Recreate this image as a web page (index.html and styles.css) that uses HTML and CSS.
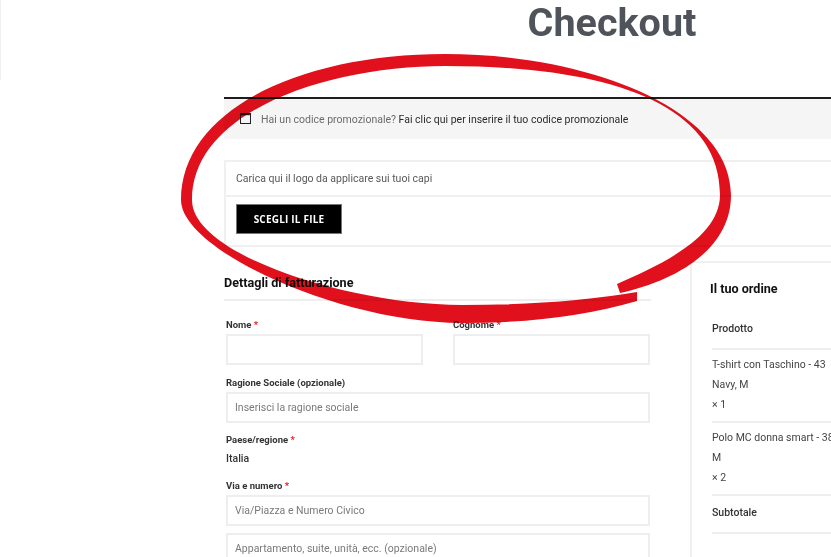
FILE: index.html
```html
<!DOCTYPE html>
<html lang="it">
<head>
<meta charset="utf-8">
<title>Checkout</title>
<link rel="stylesheet" href="styles.css">
</head>
<body>
<div class="page">
  <div class="edge"></div>
  <main class="main">
    <h1 class="title">Checkout</h1>

    <div class="promo">
      <svg class="promo-icon" width="11" height="11" viewBox="0 0 11 11" aria-hidden="true">
        <rect x="0.5" y="0.5" width="10" height="10" fill="none" stroke="#222" stroke-width="1"/>
        <rect x="0" y="0" width="11" height="2.2" fill="#222"/>
      </svg>
      <span class="muted">Hai un codice promozionale?</span>&nbsp;<a class="link" href="#">Fai clic qui per inserire il tuo codice promozionale</a>
    </div>

    <section class="upload">
      <div class="upload-label">Carica qui il logo da applicare sui tuoi capi</div>
      <div class="upload-action"><button class="file-btn" type="button">SCEGLI IL FILE</button></div>
    </section>

    <div class="cols">
      <section class="billing">
        <h3 class="section-title">Dettagli di fatturazione</h3>
        <div class="fields">
          <div class="row-2">
            <div class="field">
              <label class="lbl">Nome <span class="req">*</span></label>
              <input class="inp" type="text">
            </div>
            <div class="field">
              <label class="lbl">Cognome <span class="req">*</span></label>
              <input class="inp" type="text">
            </div>
          </div>
          <div class="field field-gap">
            <label class="lbl">Ragione Sociale (opzionale)</label>
            <input class="inp" type="text" placeholder="Inserisci la ragione sociale">
          </div>
          <div class="field field-gap-s">
            <label class="lbl">Paese/regione <span class="req">*</span></label>
            <div class="country">Italia</div>
          </div>
          <div class="field field-gap-l">
            <label class="lbl">Via e numero <span class="req">*</span></label>
            <input class="inp" type="text" placeholder="Via/Piazza e Numero Civico">
            <input class="inp inp-next" type="text" placeholder="Appartamento, suite, unità, ecc. (opzionale)">
          </div>
        </div>
      </section>

      <aside class="order">
        <h3 class="order-title">Il tuo ordine</h3>
        <div class="order-table">
          <div class="order-head">Prodotto</div>
          <div class="order-row">
            <div>T-shirt con Taschino - 43</div>
            <div>Navy, M</div>
            <div>× 1</div>
          </div>
          <div class="order-row">
            <div>Polo MC donna smart - 38</div>
            <div>M</div>
            <div>× 2</div>
          </div>
          <div class="order-sub">Subtotale</div>
        </div>
      </aside>
    </div>
  </main>
</div>

<svg class="scribble" width="831" height="557" viewBox="0 0 831 557" aria-hidden="true">
  <path fill="#e1101d" d="M 620 293
    C 675 281, 731 250, 731 195
    C 731 110, 590 54, 445 54
    C 300 54, 181 110, 181 200
    C 181 250, 340 323, 462 323
    A 275 99 0 0 0 637 301
    L 637 292
    A 265 52 0 0 1 462 305
    C 350 305, 192 255, 192 200
    C 192 110, 330 66, 445 66
    C 600 66, 720 100, 720 195
    C 720 235, 668 262, 617 284 Z"/>
</svg>
</body>
</html>
```

FILE: styles.css
```css
* { box-sizing: border-box; }

html, body {
  margin: 0;
  padding: 0;
  background: #fff;
}

body {
  width: 831px;
  height: 557px;
  overflow: hidden;
  font-family: Roboto, "Liberation Sans", Arial, sans-serif;
  color: #333;
}

.page {
  display: flex;
  align-items: flex-start;
}

.edge {
  flex: 0 0 1px;
  height: 80px;
  background: #f1f1f1;
}

.main {
  flex: 0 0 776px;
  width: 776px;
  margin-left: 223px;
}

.title {
  margin: 1px 0 52px;
  font-size: 39.5px;
  line-height: 44px;
  font-weight: 700;
  text-align: center;
  color: #4f535a;
}

/* promo bar */
.promo {
  display: flex;
  align-items: center;
  height: 42px;
  border-top: 2px solid #1d1d1d;
  background: #f5f5f5;
  padding-left: 16px;
  font-size: 10.5px;
  white-space: nowrap;
}

.promo-icon {
  flex: 0 0 auto;
  margin-right: 10px;
  margin-top: -1px;
}

.muted { color: #6b6b6b; }

.link {
  color: #2b2b2b;
  text-decoration: none;
}

/* upload box */
.upload {
  margin-top: 21px;
  border: 2px solid #f0f0f0;
}

.upload-label {
  height: 35px;
  padding: 0 10px;
  display: flex;
  align-items: center;
  font-size: 10.5px;
  color: #585858;
  border-bottom: 2px solid #f0f0f0;
}

.upload-action {
  padding: 7px 10px 11px;
}

.file-btn {
  display: block;
  width: 106px;
  height: 30px;
  padding: 0;
  background: #000;
  border: 1px solid #777;
  color: #fff;
  font-family: "Open Sans", "Liberation Sans", sans-serif;
  font-weight: 700;
  font-size: 10px;
  letter-spacing: 0.2px;
}

/* columns */
.cols {
  display: flex;
  gap: 39px;
  margin-top: 14px;
}

.billing {
  flex: 0 0 427px;
}

.section-title {
  margin: 14px 0 0;
  padding-bottom: 8px;
  border-bottom: 2px solid #eeeeee;
  font-size: 12.6px;
  line-height: 16px;
  font-weight: 700;
  color: #111;
}

.fields {
  padding: 0 1px 0 2px;
  margin-top: 17px;
}

.row-2 {
  display: grid;
  grid-template-columns: 1fr 1fr;
  gap: 30px;
}

.field {
  display: flex;
  flex-direction: column;
}

.field-gap { margin-top: 11px; }
.field-gap-s { margin-top: 10px; }
.field-gap-l { margin-top: 12px; }

.lbl {
  font-size: 9.5px;
  line-height: 14px;
  font-weight: 700;
  color: #333;
  margin-bottom: 2px;
}

.req { color: #e2231a; }

.inp {
  display: block;
  width: 100%;
  height: 31px;
  border: 2px solid #eeeeee;
  padding: 0 7px;
  font-family: Roboto, "Liberation Sans", sans-serif;
  font-size: 10.5px;
  color: #333;
  background: #fff;
  outline: none;
}

.inp::placeholder { color: #7a7a7a; }

.inp-next { margin-top: 7px; }

.country {
  margin-top: 2px;
  font-size: 10.5px;
  line-height: 16px;
  font-weight: 500;
  color: #333;
}

/* order */
.order {
  flex: 1 1 auto;
  border-top: 2px solid #f0f0f0;
  border-left: 2px solid #f0f0f0;
  padding-left: 18px;
  height: 400px;
}

.order-title {
  margin: 18px 0 0;
  font-size: 12.6px;
  line-height: 16px;
  font-weight: 700;
  color: #111;
}

.order-table {
  margin-left: 2px;
  margin-top: 22px;
  font-size: 10.5px;
  line-height: 20px;
  color: #444;
}

.order-head {
  font-weight: 500;
  color: #333;
  padding-bottom: 9px;
  border-bottom: 2px solid #eeeeee;
}

.order-row {
  padding: 5px 0 6px;
  border-bottom: 2px solid #eeeeee;
  white-space: nowrap;
}

.order-sub {
  font-weight: 500;
  color: #333;
  padding: 7px 0 9px;
  border-bottom: 2px solid #eeeeee;
}

/* hand-drawn highlight over the page */
.scribble {
  position: absolute;
  left: 0;
  top: 0;
  pointer-events: none;
  mix-blend-mode: multiply;
}
```
